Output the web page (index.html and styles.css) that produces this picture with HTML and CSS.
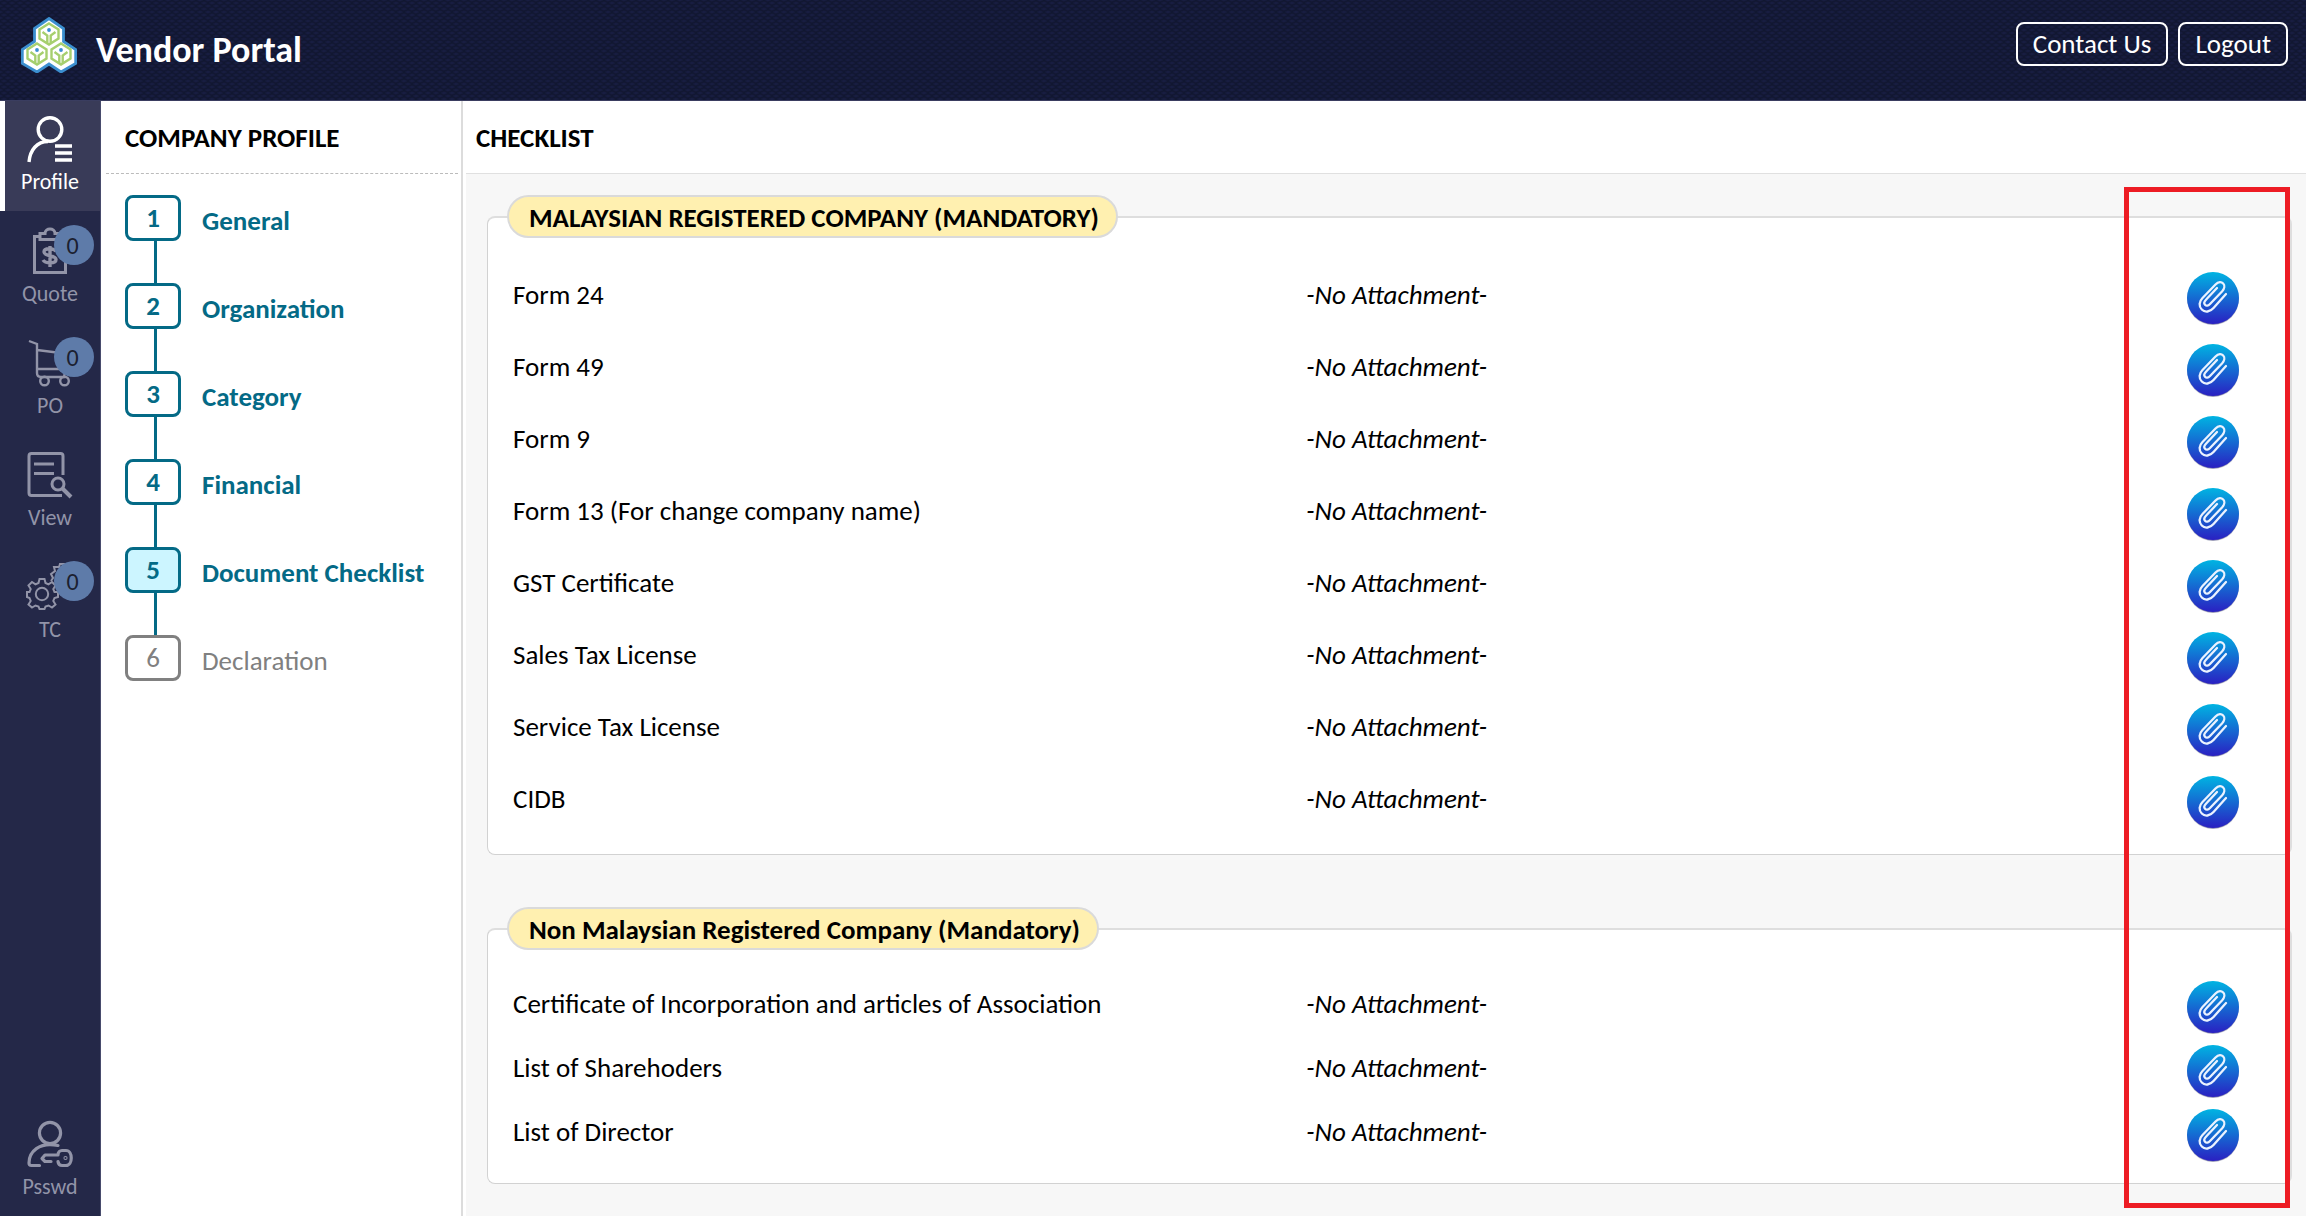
FILE: index.html
```html
<!DOCTYPE html>
<html lang="en">
<head>
<meta charset="utf-8">
<title>Vendor Portal</title>
<link rel="stylesheet" href="styles.css">
</head>
<body>
<svg class="sprite" aria-hidden="true">
  <defs>
    <linearGradient id="blue" x1="0" y1="0" x2="0" y2="1">
      <stop offset="0" stop-color="#00b4e2"/>
      <stop offset="1" stop-color="#2a20c2"/>
    </linearGradient>
    <symbol id="attach" viewBox="0 0 56 56">
      <circle cx="28" cy="29" r="26" fill="#00104a" opacity=".25"/>
      <circle cx="28" cy="29" r="25.5" fill="#1a1060" opacity=".4"/>
      <circle cx="28" cy="28" r="26" fill="url(#blue)"/>
      <path d="M41 24 28.500 38C25 42 20 42.800 16.800 39.500S14 31.500 17.500 28L30.500 14.500C33.500 11.500 36.500 11.800 38.200 13.500S39.700 18.500 37 21.500L25 34C23 36 21.300 36.200 20 34.800S19.200 31.500 21.200 29.500L32 18" fill="none" stroke="#eaf2ff" stroke-width="2.300" stroke-linecap="round" stroke-linejoin="round"/>
    </symbol>
    <symbol id="cell" viewBox="0 0 24 24">
      <path d="M12 1.500 21.500 7.500V16.500L12 22.500 2.500 16.500V7.500Z" fill="#fff" stroke="#a6cf6e" stroke-width="2.400"/>
      <path d="M10.300 21V13.500L5.500 10M13.700 21V13.500L18.500 10" fill="none" stroke="#a6cf6e" stroke-width="2.400"/>
      <circle cx="12" cy="8" r="1.900" fill="#3b8fd0"/>
    </symbol>
  </defs>
</svg>

<header class="topbar">
  <svg class="logo" viewBox="0 0 56 56" aria-hidden="true">
    <path d="M28 1.500 42.500 11.500V24.500L54.700 32.500V46.500L40 55 28 47 16 55 1.300 46.500V32.500L13.500 24.500V11.500Z" fill="#fff" stroke="#3b8fd0" stroke-width="2.800"/>
    <use href="#cell" x="16" y="5" width="24" height="24"/>
    <use href="#cell" x="4" y="25" width="24" height="24"/>
    <use href="#cell" x="28" y="25" width="24" height="24"/>
  </svg>
  <h1 class="brand">Vendor Portal</h1>
  <button class="top-btn" type="button">Contact Us</button>
  <button class="top-btn" type="button">Logout</button>
</header>

<div class="layout">
  <nav class="rail" aria-label="Main">
    <a class="rail-item active" href="#profile">
      <svg class="rail-icon" viewBox="0 0 46 46" fill="none" stroke="currentColor" stroke-width="3.400"><circle cx="23" cy="13.500" r="11.800"/><path d="M2 46C3 34 10 25.500 21 25.500M28 30H45M28 37H45M28 44H45"/></svg>
      <span>Profile</span>
    </a>
    <a class="rail-item" href="#quote">
      <svg class="rail-icon" viewBox="0 0 46 46" fill="none" stroke="currentColor" stroke-width="3"><path d="M13 8.500H7.500V44.500H38.500V8.500H33M13 5.500H18C18-.500 28-.500 28 5.500H33V11.500H13Z"/><path d="M29 23.500C27 20 17 19.500 17 24S29 27 29 31.500 18 35.500 16 32M23 18V39" stroke-width="3.400"/></svg>
      <b class="badge">0</b>
      <span>Quote</span>
    </a>
    <a class="rail-item" href="#po">
      <svg class="rail-icon" viewBox="0 0 46 46" fill="none" stroke="currentColor" stroke-width="2.400"><path d="M2 1 10 4V33Q10 37 14 37H37L42 14 10 10M10 29H38"/><circle cx="17.500" cy="41" r="4.300"/><circle cx="37.500" cy="41" r="4.300"/></svg>
      <b class="badge">0</b>
      <span>PO</span>
    </a>
    <a class="rail-item" href="#view">
      <svg class="rail-icon" viewBox="0 0 46 46" fill="none" stroke="currentColor" stroke-width="3"><path d="M36 23V4Q36 1.500 33.500 1.500H4.500Q2 1.500 2 4V41Q2 43.500 4.500 43.500H35M7 12H27M7 21.500H27"/><circle cx="31" cy="32" r="6"/><path d="M35.500 36.500 44 45" stroke-width="4"/></svg>
      <span>View</span>
    </a>
    <a class="rail-item" href="#tc">
      <svg class="rail-icon" viewBox="0 0 46 46" fill="none" stroke="currentColor" stroke-width="2"><path d="M12.500 15H17.500L18.500 19 21.500 20.300 25 18 28.500 21.500 26.300 25 27.500 28H31V33L27.500 34 26.300 37 28.500 40.500 25 43.500 21.500 41.500 18.500 42.500 17.500 45H12.500L11.500 42.500 8.500 41.500 5 43.500 1.500 40.500 3.700 37 2.500 34 0 33V28H2.500L3.700 25 1.500 21.500 5 18 8.500 20.300 11.500 19Z"/><circle cx="15" cy="30" r="6.200"/><path d="M24 17 26 14 24 10 28 7 27 3H32L33 0H37L38 4 42 3"/></svg>
      <b class="badge">0</b>
      <span>TC</span>
    </a>
    <a class="rail-item last" href="#password">
      <svg class="rail-icon" viewBox="0 0 46 46" fill="none" stroke="currentColor" stroke-width="3.200" stroke-linecap="round" stroke-linejoin="round"><circle cx="23" cy="12" r="10.600"/><path d="M31 24.500C12 20.500 2 31 2 42Q2 44.500 4.500 44.500H12.500M24 40.500H18L15 37.500 18 34H31C31 31 33 29.500 35 29.500H39C46 29.500 46 44.500 39 44.500H35Q31.500 44.500 31 40.500"/><circle cx="38.500" cy="37" r=".5"/></svg>
      <span>Psswd</span>
    </a>
  </nav>

  <aside class="steps-panel">
    <h2 class="panel-title">COMPANY PROFILE</h2>
    <ol class="steps">
      <li><a class="step" href="#general"><span class="num">1</span><span class="step-name">General</span></a></li>
      <li><a class="step" href="#organization"><span class="num">2</span><span class="step-name">Organization</span></a></li>
      <li><a class="step" href="#category"><span class="num">3</span><span class="step-name">Category</span></a></li>
      <li><a class="step" href="#financial"><span class="num">4</span><span class="step-name">Financial</span></a></li>
      <li><a class="step current" href="#checklist"><span class="num">5</span><span class="step-name">Document Checklist</span></a></li>
      <li><a class="step pending" href="#declaration"><span class="num">6</span><span class="step-name">Declaration</span></a></li>
    </ol>
  </aside>

  <main class="content">
    <h2 class="content-title">CHECKLIST</h2>
    <div class="groups">
      <section class="group">
        <h3 class="pill">MALAYSIAN REGISTERED COMPANY (MANDATORY)</h3>
        <table class="docs">
          <tr><td>Form 24</td><td class="none">-No Attachment-</td><td class="act"><button type="button" aria-label="Attach Form 24"><svg><use href="#attach"/></svg></button></td></tr>
          <tr><td>Form 49</td><td class="none">-No Attachment-</td><td class="act"><button type="button" aria-label="Attach Form 49"><svg><use href="#attach"/></svg></button></td></tr>
          <tr><td>Form 9</td><td class="none">-No Attachment-</td><td class="act"><button type="button" aria-label="Attach Form 9"><svg><use href="#attach"/></svg></button></td></tr>
          <tr><td>Form 13 (For change company name)</td><td class="none">-No Attachment-</td><td class="act"><button type="button" aria-label="Attach Form 13"><svg><use href="#attach"/></svg></button></td></tr>
          <tr><td>GST Certificate</td><td class="none">-No Attachment-</td><td class="act"><button type="button" aria-label="Attach GST Certificate"><svg><use href="#attach"/></svg></button></td></tr>
          <tr><td>Sales Tax License</td><td class="none">-No Attachment-</td><td class="act"><button type="button" aria-label="Attach Sales Tax License"><svg><use href="#attach"/></svg></button></td></tr>
          <tr><td>Service Tax License</td><td class="none">-No Attachment-</td><td class="act"><button type="button" aria-label="Attach Service Tax License"><svg><use href="#attach"/></svg></button></td></tr>
          <tr><td>CIDB</td><td class="none">-No Attachment-</td><td class="act"><button type="button" aria-label="Attach CIDB"><svg><use href="#attach"/></svg></button></td></tr>
        </table>
      </section>
      <section class="group">
        <h3 class="pill">Non Malaysian Registered Company (Mandatory)</h3>
        <table class="docs compact">
          <tr><td>Certificate of Incorporation and articles of Association</td><td class="none">-No Attachment-</td><td class="act"><button type="button" aria-label="Attach Certificate of Incorporation"><svg><use href="#attach"/></svg></button></td></tr>
          <tr><td>List of Sharehoders</td><td class="none">-No Attachment-</td><td class="act"><button type="button" aria-label="Attach List of Sharehoders"><svg><use href="#attach"/></svg></button></td></tr>
          <tr><td>List of Director</td><td class="none">-No Attachment-</td><td class="act"><button type="button" aria-label="Attach List of Director"><svg><use href="#attach"/></svg></button></td></tr>
        </table>
      </section>
    </div>
    <div class="highlight"></div>
  </main>
</div>
</body>
</html>
```
FILE: styles.css
```css
* { box-sizing: border-box; }

body {
  margin: 0;
  min-height: 100vh;
  display: flex;
  flex-direction: column;
  font-family: Calibri, Carlito, Lato, sans-serif;
  font-size: 27px;
  line-height: 32px;
  color: #000;
  background: #fff;
}

h1, h2, h3, ol { margin: 0; padding: 0; }
a { color: inherit; text-decoration: none; }
button { font: inherit; cursor: pointer; }

.sprite { position: absolute; width: 0; height: 0; }

/* Top bar */
.topbar {
  display: flex;
  align-items: center;
  gap: 10px;
  height: 101px;
  padding: 0 18px 0 21px;
  color: #fff;
  background-color: #11162f;
  background-image:
    radial-gradient(ellipse 4px 2px at center, #1a2048, transparent),
    radial-gradient(ellipse 4px 2px at center, #1a2048, transparent);
  background-size: 8px 6px;
  background-position: 0 0, 4px 3px;
  border-bottom: 1px solid #3a3d60;
}
.logo { width: 56px; height: 56px; margin-bottom: 10px; }
.brand { margin: 0 auto 0 9px; font-size: 36px; line-height: 40px; font-weight: 700; }
.top-btn {
  height: 44px;
  margin-bottom: 12px;
  padding: 0 15px;
  line-height: 40px;
  color: #fff;
  background: none;
  border: 2px solid #fff;
  border-radius: 8px;
}

.layout { flex: 1; display: flex; }

/* Icon rail */
.rail {
  flex: none;
  width: 101px;
  display: flex;
  flex-direction: column;
  gap: 2px;
  background: #242848;
  border-right: 1px solid #474b6c;
}
.rail-item {
  position: relative;
  display: flex;
  flex-direction: column;
  align-items: center;
  gap: 7px;
  height: 110px;
  padding-top: 15px;
  font-size: 22px;
  line-height: 26px;
  color: #9294a8;
}
.rail-item.active {
  color: #fff;
  background: #393b58;
  box-shadow: inset 5px 0 #fff;
}
.rail-item.last { margin-top: auto; }
.rail-icon { width: 46px; height: 46px; overflow: visible; }
.badge {
  position: absolute;
  top: 12px;
  left: 54px;
  width: 40px;
  height: 40px;
  padding-right: 3px;
  border-radius: 50%;
  font-size: 24px;
  line-height: 42px;
  font-weight: 400;
  text-align: center;
  color: #1b2030;
  background: #5e7ba9;
}

/* Profile steps */
.steps-panel {
  flex: none;
  width: 362px;
  padding: 0 3px 0 5px;
  border-right: 2px solid #dcdcdc;
}
.panel-title, .content-title {
  height: 73px;
  padding: 0 19px;
  font-size: 27px;
  line-height: 73px;
  font-weight: 700;
}
.panel-title { border-bottom: 1px dashed #bbb; }
.steps {
  display: flex;
  flex-direction: column;
  gap: 42px;
  padding: 21px 19px;
  list-style: none;
}
.steps li { position: relative; }
.steps li + li::before {
  content: "";
  position: absolute;
  bottom: 100%;
  left: 29px;
  width: 3px;
  height: 42px;
  background: #046a86;
}
.step { display: flex; align-items: center; gap: 21px; color: #046a86; font-weight: 700; }
.num {
  width: 56px;
  height: 46px;
  border: 3px solid #046a86;
  border-radius: 8px;
  line-height: 40px;
  text-align: center;
}
.step-name { padding-top: 6px; }
.current .num { background: #ccf5ff; }
.pending { color: #808080; font-weight: 400; }
.pending .num { border-color: #808080; }

/* Checklist */
.content {
  position: relative;
  flex: 1;
  display: flex;
  flex-direction: column;
  padding-left: 3px;
}
.content-title { padding: 0 10px; border-bottom: 1px solid #e0e0e0; }
.groups {
  flex: 1;
  display: flex;
  flex-direction: column;
  gap: 73px;
  padding: 42px 14px 32px 21px;
  background: #f7f7f7;
}
.group {
  padding: 0 20px 16px 19px;
  background: #fff;
  border: 2px solid #dedede;
  border-bottom: 1px solid #d2d2d2;
  border-left: 1px solid #d2d2d2;
  border-radius: 8px;
}
.pill {
  width: fit-content;
  height: 43px;
  margin-top: -23px;
  padding: 0 17px 0 20px;
  font-size: 27px;
  line-height: 42px;
  font-weight: 700;
  background: #fff0b0;
  border: 2px solid #dadada;
  border-radius: 22px;
}
.docs {
  width: 100%;
  margin-top: 24px;
  table-layout: fixed;
  border-collapse: collapse;
}
.docs.compact { margin-top: 25px; }
.docs tr { height: 72px; }
.docs.compact tr { height: 64px; }
.docs td { padding: 0 0 6px 6px; width: 45%; }
.docs .none { font-style: italic; }
.docs .act { width: 10%; padding: 0 29px 0 0; text-align: right; }
.act button { display: block; margin-left: auto; padding: 0; background: none; border: 0; }
.act svg { display: block; width: 56px; height: 56px; }

.highlight {
  position: absolute;
  top: 86px;
  right: 16px;
  bottom: 8px;
  width: 166px;
  border: 5px solid #ed1c24;
  pointer-events: none;
}
```
